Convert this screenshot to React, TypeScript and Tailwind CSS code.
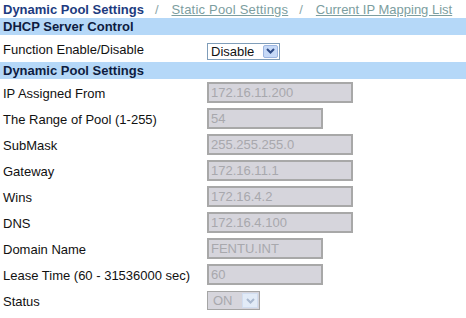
const rows: { label: string; value: string; w: string; kind?: "select" }[] = [
  { label: "IP Assigned From", value: "172.16.11.200", w: "w-[146px]" },
  { label: "The Range of Pool (1-255)", value: "54", w: "w-[116px]" },
  { label: "SubMask", value: "255.255.255.0", w: "w-[146px]" },
  { label: "Gateway", value: "172.16.11.1", w: "w-[146px]" },
  { label: "Wins", value: "172.16.4.2", w: "w-[146px]" },
  { label: "DNS", value: "172.16.4.100", w: "w-[146px]" },
  { label: "Domain Name", value: "FENTU.INT", w: "w-[116px]" },
  { label: "Lease Time (60 - 31536000 sec)", value: "60", w: "w-[116px]" },
  { label: "Status", value: "ON", w: "w-[53px]", kind: "select" },
];

const Chevron = ({ color }: { color: string }) => (
  <svg width="9" height="6" viewBox="0 0 9 6">
    <path d="M1 1 L4.5 4.5 L8 1" fill="none" stroke={color} strokeWidth="2" />
  </svg>
);

const Header = ({ text }: { text: string }) => (
  <div className="h-[17px] bg-[#b5d8f8] pl-[3px] flex items-center text-[13px] font-bold text-[#0e1c40] leading-none">
    {text}
  </div>
);

export default function App() {
  return (
    <div className="w-[466px] h-[318px] bg-white overflow-hidden font-['Liberation_Sans',Arial,sans-serif]">
      <div className="h-[18px] flex items-center pl-[3px] text-[13px] leading-none">
        <span className="font-bold text-[#1d3b80]">Dynamic Pool Settings</span>
        <span className="text-[#8aa6a8] ml-[11px] mr-[13px]">/</span>
        <span className="text-[#7c9ea0] underline tracking-[0.2px]">Static Pool Settings</span>
        <span className="text-[#8aa6a8] ml-[11px] mr-[13px]">/</span>
        <span className="text-[#7c9ea0] underline">Current IP Mapping List</span>
      </div>
      <Header text="DHCP Server Control" />
      <div className="h-[27px] grid grid-cols-[207px_1fr] items-center text-[13px] text-[#111]">
        <span className="pl-[3px] mt-[2px]">Function Enable/Disable</span>
        <div className="mt-[5px] w-[73px] h-[17px] border border-[#7f9db9] bg-white flex items-center justify-between pl-[3px] pr-px">
          <span className="leading-none">Disable</span>
          <span className="w-[15px] h-[13px] bg-[#c6d9f7] border border-[#9cb5e0] rounded-[2px] flex items-center justify-center">
            <Chevron color="#2c4a86" />
          </span>
        </div>
      </div>
      <Header text="Dynamic Pool Settings" />
      {rows.map((r) => (
        <div key={r.label} className="h-[26px] grid grid-cols-[207px_1fr] items-center text-[13px]">
          <span className="pl-[3px] mt-[3px] text-[#111]">{r.label}</span>
          {r.kind === "select" ? (
            <div className={`${r.w} mt-[1px] h-[19px] border border-[#a5a5a5] bg-[#d6d5dc] flex items-center justify-between pl-[5px] pr-px`}>
              <span className="text-[#a8a8ad] leading-none">{r.value}</span>
              <span className="w-[16px] h-[15px] bg-[#e2ebf7] border border-[#d1ddf0] flex items-center justify-center">
                <Chevron color="#a9b8cf" />
              </span>
            </div>
          ) : (
            <div className={`${r.w} mt-[1px] h-[21px] border-2 border-[#a8a8a8] bg-[#d6d5dc] flex items-center pl-[2px] text-[#a8a8ad] leading-none`}>
              {r.value}
            </div>
          )}
        </div>
      ))}
    </div>
  );
}
